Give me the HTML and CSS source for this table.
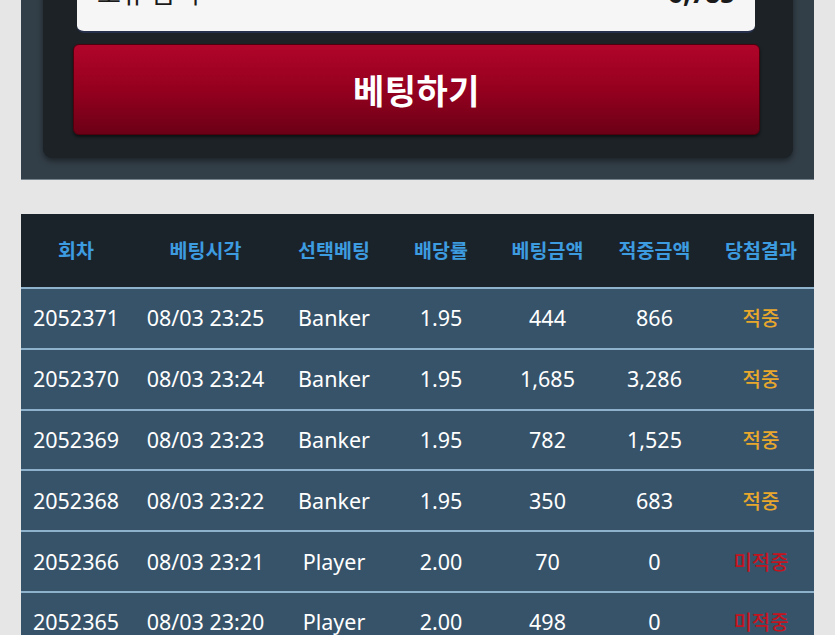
FILE: index.html
```html
<!DOCTYPE html>
<html lang="ko">
<head>
<meta charset="utf-8">
<link rel="stylesheet" href="styles.css">
</head>
<body>
<div class="page">
  <section class="panel">
    <div class="inner">
      <div class="balance">
        <span class="label">보유 금액</span>
        <span class="value">6,785</span>
      </div>
      <button class="bet-btn">베팅하기</button>
    </div>
  </section>

  <table class="history">
    <colgroup>
      <col class="c1"><col class="c2"><col class="c3"><col class="c4"><col class="c5"><col class="c6"><col class="c7">
    </colgroup>
    <thead>
      <tr><th>회차</th><th>베팅시각</th><th>선택베팅</th><th>배당률</th><th>베팅금액</th><th>적중금액</th><th>당첨결과</th></tr>
    </thead>
    <tbody>
      <tr><td>2052371</td><td>08/03 23:25</td><td>Banker</td><td>1.95</td><td>444</td><td>866</td><td class="win">적중</td></tr>
      <tr><td>2052370</td><td>08/03 23:24</td><td>Banker</td><td>1.95</td><td>1,685</td><td>3,286</td><td class="win">적중</td></tr>
      <tr><td>2052369</td><td>08/03 23:23</td><td>Banker</td><td>1.95</td><td>782</td><td>1,525</td><td class="win">적중</td></tr>
      <tr><td>2052368</td><td>08/03 23:22</td><td>Banker</td><td>1.95</td><td>350</td><td>683</td><td class="win">적중</td></tr>
      <tr><td>2052366</td><td>08/03 23:21</td><td>Player</td><td>2.00</td><td>70</td><td>0</td><td class="lose">미적중</td></tr>
      <tr><td>2052365</td><td>08/03 23:20</td><td>Player</td><td>2.00</td><td>498</td><td>0</td><td class="lose">미적중</td></tr>
    </tbody>
  </table>
</div>
</body>
</html>
```

FILE: styles.css
```css
html, body {
  margin: 0;
  padding: 0;
  background: #e6e6e6;
  overflow: hidden;
}
body {
  font-family: "Noto Sans", "Noto Sans CJK KR", sans-serif;
}
.page {
  padding: 0 21px 0 21px;
}
.panel {
  background: #333f48;
  border-bottom: 1px solid #76838d;
  padding: 0 21px 21px 22px;
  margin-top: -40px;
}
.inner {
  background: #1c2226;
  border-radius: 0 0 9px 9px;
  box-shadow: 0 3px 6px rgba(0, 0, 0, 0.45);
  padding: 0 33px 23px 30px;
}
.balance {
  display: flex;
  justify-content: space-between;
  align-items: flex-end;
  height: 73px;
  box-sizing: border-box;
  margin: 0 5px 0 4px;
  padding: 0 20px 25px 20px;
  background: #f6f6f6;
  border-radius: 0 0 7px 7px;
  border-bottom: 2px solid #26304a;
  color: #1a1a1a;
  font-size: 26px;
  line-height: 1;
}
.balance .value {
  font-weight: 700;
}
.bet-btn {
  display: block;
  width: 100%;
  height: 91px;
  margin-top: 11px;
  border: 1px solid #4e000d;
  border-radius: 6px;
  background: linear-gradient(#b0052a, #95001f 50%, #6c0016);
  box-shadow: 0 2px 3px rgba(0, 0, 0, 0.5);
  color: #ffffff;
  font-family: "Noto Sans CJK KR", sans-serif;
  font-weight: 700;
  font-size: 34px;
  letter-spacing: 0.5px;
  cursor: pointer;
}
.history {
  width: 100%;
  margin-top: 34px;
  border-collapse: collapse;
  table-layout: fixed;
  color: #ffffff;
}
.c1 { width: 110px; }
.c2 { width: 149px; }
.c3 { width: 108px; }
.c4 { width: 106px; }
.c5 { width: 107px; }
.c6 { width: 107px; }
.c7 { width: 106px; }
.history th {
  background: #1b232a;
  color: #3d9be0;
  font-family: "Noto Sans CJK KR", sans-serif;
  font-weight: 700;
  font-size: 19.5px;
  height: 71px;
  padding: 0 0 2px 0;
  white-space: nowrap;
}
.history td {
  background: #36536a;
  border-top: 2px solid #8eb2cc;
  height: 57.8px;
  padding: 0 0 1px 0;
  text-align: center;
  font-size: 21.5px;
  white-space: nowrap;
}
.history td.win {
  color: #e9a82c;
  font-family: "Noto Sans CJK KR", sans-serif;
  font-weight: 500;
  font-size: 20px;
}
.history td.lose {
  color: #c2141f;
  font-family: "Noto Sans CJK KR", sans-serif;
  font-weight: 500;
  font-size: 20px;
}
```
